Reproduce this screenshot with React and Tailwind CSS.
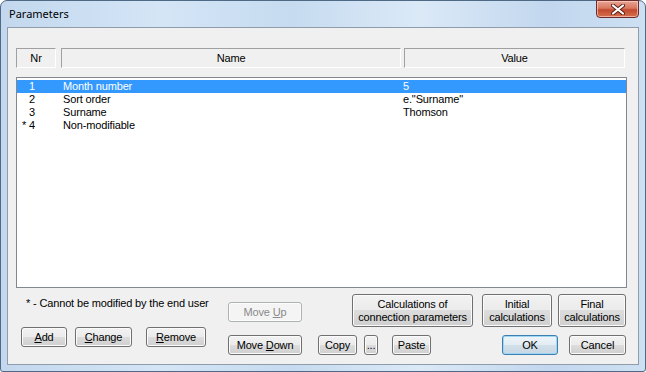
import React from "react";

function Btn({ children, className = "", disabled, def }) {
  let look =
    "border-[#707070] text-black bg-[linear-gradient(#f2f2f2_0%,#ebebeb_50%,#dddddd_50%,#cfcfcf_100%)] shadow-[inset_0_0_0_1px_#fbfbfb]";
  if (disabled)
    look = "border-[#adb2b5] text-[#8a8a8a] bg-[#f4f4f4] shadow-[inset_0_0_0_1px_#fcfcfc]";
  if (def)
    look =
      "border-[#3c7fb1] text-black bg-[linear-gradient(#eef5fa_0%,#e3ecf3_50%,#d3e0ea_50%,#c6d6e3_100%)] shadow-[inset_0_0_0_1px_#9fd6f2]";
  return (
    <div
      className={`flex items-center justify-center text-center leading-[13px] rounded-[3px] border shrink-0 ${look} ${className}`}
    >
      <div>{children}</div>
    </div>
  );
}

const rows = [
  { nr: "1", name: "Month number", value: "5", sel: true },
  { nr: "2", name: "Sort order", value: 'e."Surname"' },
  { nr: "3", name: "Surname", value: "Thomson" },
  { nr: "4", star: true, name: "Non-modifiable", value: "" },
];

export default function App() {
  return (
    <div className="w-[646px] h-[372px] font-['Liberation_Sans',Arial,sans-serif] text-[11px] tracking-[-0.15px] text-black">
      <div className="relative w-[646px] h-[372px] flex flex-col rounded-t-[7px] rounded-b-[3px] border border-[#4f6a85] bg-[linear-gradient(90deg,#c3d8ee_0%,#d4e5f6_25%,#c6dbf0_45%,#dbe9f7_65%,#c2d7ee_85%,#cde0f3_100%)]">
        {/* title bar */}
        <div className="h-[26px] flex items-start shrink-0">
          <div className="pl-[8px] pt-[5px] text-[11px] leading-[16px] tracking-normal font-['Noto_Sans',sans-serif] text-black">
            Parameters
          </div>
          <div className="ml-auto mr-[6px] -mt-px w-[43px] h-[18px] rounded-b-[4px] border border-[#6d2b2b] bg-[linear-gradient(#e8a596_0%,#d9775f_45%,#c14a2f_55%,#d8704f_100%)] shadow-[inset_0_0_0_1px_rgba(255,220,210,0.6)] flex items-center justify-center">
            <svg width="14" height="11" viewBox="0 0 14 11">
              <path d="M2 1.5 L12 9.5 M12 1.5 L2 9.5" stroke="#5a1e14" strokeWidth="4" strokeLinecap="round" />
              <path d="M2 1.5 L12 9.5 M12 1.5 L2 9.5" stroke="#ffffff" strokeWidth="2.2" strokeLinecap="round" />
            </svg>
          </div>
        </div>
        {/* client */}
        <div className="flex-1 min-h-0 px-[6px] pb-[6px] flex">
          <div className="flex-1 min-w-0 border border-[#8e9cab] bg-[#f0f0f0] pt-[20px] pl-[8px] pr-[11px] flex flex-col">
            {/* header */}
            <div className="h-[20px] flex shrink-0">
              <div className="w-[40px] border-t border-l border-[#a0a0a0] border-b border-r border-b-white border-r-white flex items-center justify-center">
                Nr
              </div>
              <div className="ml-[5px] w-[340px] border-t border-l border-[#a0a0a0] border-b border-r border-b-white border-r-white flex items-center justify-center">
                Name
              </div>
              <div className="ml-[3px] w-[221px] border-t border-l border-[#a0a0a0] border-b border-r border-b-white border-r-white flex items-center justify-center">
                Value
              </div>
            </div>
            {/* list */}
            <div className="mt-[9px] h-[211px] shrink-0 border border-[#828790] bg-white pt-[2px]">
              {rows.map((r) => (
                <div
                  key={r.nr}
                  className={`h-[13px] leading-[13px] flex ${r.sel ? "bg-[#3399ff] text-white" : ""}`}
                >
                  <div className="w-[18px] text-right whitespace-nowrap">
                    {r.star ? <span className="mr-[3px]">*</span> : null}
                    {r.nr}
                  </div>
                  <div className="ml-[28px] w-[340px] whitespace-nowrap">{r.name}</div>
                  <div className="whitespace-nowrap">{r.value}</div>
                </div>
              ))}
            </div>
            {/* bottom */}
            <div className="flex pl-[5px]">
              <div className="w-[185px] shrink-0 flex flex-col">
                <div className="mt-[9px] ml-[5px] h-[13px] leading-[13px] whitespace-nowrap">
                  * - Cannot be modified by the end user
                </div>
                <div className="mt-[17px] flex">
                  <Btn className="w-[46px] h-[20px]">
                    <span className="underline">A</span>dd
                  </Btn>
                  <Btn className="ml-[8px] w-[57px] h-[20px]">
                    <span className="underline">C</span>hange
                  </Btn>
                  <Btn className="ml-[14px] w-[60px] h-[20px]">
                    <span className="underline">R</span>emove
                  </Btn>
                </div>
              </div>
              <div className="ml-[22px] w-[74px] shrink-0 flex flex-col">
                <Btn disabled className="mt-[14px] w-[74px] h-[20px]">
                  Move <span className="underline">U</span>p
                </Btn>
                <Btn className="mt-[13px] w-[74px] h-[20px]">
                  Move <span className="underline">D</span>own
                </Btn>
              </div>
              <div className="ml-[16px] w-[308px] shrink-0 flex flex-col">
                <div className="mt-[6px] flex justify-end">
                  <Btn className="w-[121px] h-[33px]">
                    Calculations of
                    <br />
                    connection parameters
                  </Btn>
                  <Btn className="ml-[9px] w-[70px] h-[33px]">
                    Initial
                    <br />
                    calculations
                  </Btn>
                  <Btn className="ml-[6px] w-[68px] h-[33px]">
                    Final
                    <br />
                    calculations
                  </Btn>
                </div>
                <div className="mt-[8px] flex">
                  <Btn className="w-[39px] h-[20px]">Copy</Btn>
                  <Btn className="ml-[7px] w-[14px] h-[20px]">...</Btn>
                  <Btn className="ml-[14px] w-[39px] h-[20px]">Paste</Btn>
                  <Btn def className="ml-[71px] w-[56px] h-[20px]">
                    OK
                  </Btn>
                  <Btn className="ml-[11px] w-[57px] h-[20px]">Cancel</Btn>
                </div>
              </div>
            </div>
          </div>
        </div>
      </div>
    </div>
  );
}
